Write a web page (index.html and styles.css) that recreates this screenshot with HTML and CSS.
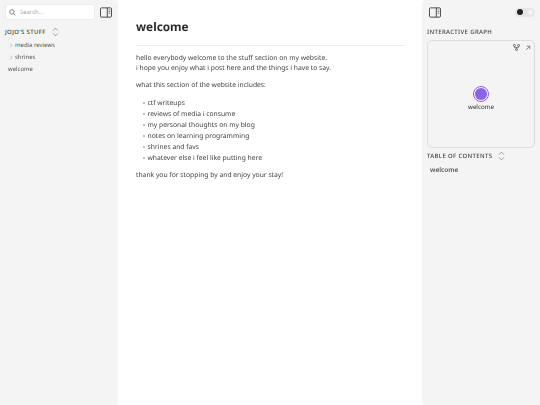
FILE: index.html
```html
<!DOCTYPE html>
<html lang="en">
<head>
<meta charset="utf-8">
<title>welcome</title>
<link rel="stylesheet" href="styles.css">
</head>
<body>
<div class="page">
  <aside class="side left">
    <div class="top-row">
      <div class="search">
        <svg class="search-icon" viewBox="0 0 12 12"><circle cx="5" cy="5" r="3.8"/><path d="M7.8 7.8 11 11"/></svg>
        <span>Search...</span>
      </div>
      <svg class="panel-icon" viewBox="0 0 14 12"><rect x="0.6" y="0.6" width="12.8" height="10.8" rx="1.2"/><path d="M8.5 0.6V11.4"/><path class="thin" d="M10 3h2M10 5h2M10 7h2"/></svg>
    </div>
    <div class="explorer-head">
      <span class="caps">JOJO'S STUFF</span>
      <svg class="updown" viewBox="0 0 10 14"><path d="M1.5 5 5 1.5 8.5 5M1.5 9 5 12.5 8.5 9"/></svg>
    </div>
    <ul class="tree">
      <li class="folder"><svg class="chev" viewBox="0 0 6 8"><path d="M1.5 1 4.5 4 1.5 7"/></svg>media reviews</li>
      <li class="folder"><svg class="chev" viewBox="0 0 6 8"><path d="M1.5 1 4.5 4 1.5 7"/></svg>shrines</li>
      <li class="file">welcome</li>
    </ul>
  </aside>
  <main class="content">
    <h1>welcome</h1>
    <hr>
    <p>hello everybody welcome to the stuff section on my website.<br>i hope you enjoy what i post here and the things i have to say.</p>
    <p>what this section of the website includes:</p>
    <ul class="list">
      <li>ctf writeups</li>
      <li>reviews of media i consume</li>
      <li>my personal thoughts on my blog</li>
      <li>notes on learning programming</li>
      <li>shrines and favs</li>
      <li>whatever else i feel like putting here</li>
    </ul>
    <p>thank you for stopping by and enjoy your stay!</p>
  </main>
  <aside class="side right">
    <div class="right-top">
      <svg class="panel-icon" viewBox="0 0 14 12"><rect x="0.6" y="0.6" width="12.8" height="10.8" rx="1.2"/><path d="M8.5 0.6V11.4"/><path class="thin" d="M10 3h2M10 5h2M10 7h2"/></svg>
      <div class="toggle"><span class="knob"></span><span class="sun"></span></div>
    </div>
    <div class="caps graph-title">INTERACTIVE GRAPH</div>
    <div class="graph">
      <div class="graph-tools">
        <svg class="tool" viewBox="0 0 10 10"><circle cx="2" cy="2" r="1.4"/><circle cx="8" cy="2" r="1.4"/><circle cx="5" cy="8" r="1.4"/><path d="M2 3.4V4.500Q2 5.200 3 5.200H7Q8 5.200 8 4.500V3.400M5 5.200V6.600"/></svg>
        <svg class="tool arrow" viewBox="0 0 10 10"><path d="M2 8 8 2M3 2H8V7"/></svg>
      </div>
      <div class="node"><span class="dot"></span><span class="node-label">welcome</span></div>
    </div>
    <div class="toc-head">
      <span class="caps">TABLE OF CONTENTS</span>
      <svg class="updown" viewBox="0 0 10 14"><path d="M1.5 5 5 1.5 8.5 5M1.5 9 5 12.5 8.5 9"/></svg>
    </div>
    <div class="toc-item">welcome</div>
  </aside>
</div>
</body>
</html>
```
FILE: styles.css
```css
* { box-sizing: border-box; }
html, body { margin: 0; height: 100%; }
body { font-family: "Noto Sans", sans-serif; color: #3f3f3f; background: #fff; overflow: hidden; text-rendering: geometricPrecision; filter: blur(0.28px); }
.page { display: flex; width: 540px; height: 405px; }
.side { width: 118px; flex: none; background: #f4f4f4; }
.left { padding: 4px 6px 0 5px; border-radius: 0 4px 4px 0; }
.right { padding: 6px 5px 0; border-radius: 4px 0 0 4px; }
.content { flex: 1; padding: 0 17px 0 18px; font-size: 6.75px; line-height: 10px; }

.top-row { display: flex; align-items: center; justify-content: space-between; height: 16px; }
.search { display: flex; align-items: center; gap: 4px; width: 90px; height: 16px; padding-left: 3px; background: #fff; border: 1px solid #ececec; border-radius: 4px; font-size: 5.9px; color: #a8a8a8; }
.search-icon { width: 7px; height: 7px; fill: none; stroke: #555; stroke-width: 1.2; }
.panel-icon { width: 12px; height: 11px; fill: none; stroke: #333; stroke-width: 1; flex: none; }
.panel-icon .thin { stroke-width: 0.7; }

.caps { font-size: 6px; font-weight: 500; letter-spacing: 0.35px; color: #3f3f3f; }
.explorer-head { display: flex; align-items: center; gap: 6px; margin-top: 5px; height: 14px; }
.updown { width: 7px; height: 10px; fill: none; stroke: #777; stroke-width: 1; }
.tree { list-style: none; margin: 0; padding: 0; font-size: 5.95px; color: #555; }
.tree li { height: 12px; line-height: 12px; white-space: nowrap; }
.folder { display: flex; align-items: center; gap: 2px; padding-left: 4px; }
.file { padding-left: 3px; }
.chev { width: 4px; height: 5px; fill: none; stroke: #999; stroke-width: 1; }

h1 { margin: 0; padding-top: 19px; font-size: 11.8px; line-height: 16px; font-weight: 700; color: #2b2b2b; }
hr { border: 0; border-top: 1px solid #ececec; margin: 10px 0 7px; }
p { margin: 0 0 7px; }
.list { margin: 0 0 7px; padding: 0 0 0 11.5px; list-style: none; font-size: 6.75px; line-height: 11px; }
.list li { position: relative; height: 11px; }
.list li::before { content: ""; position: absolute; left: -5px; top: 4.5px; width: 2px; height: 2px; border-radius: 50%; background: #aaa; }

.right-top { display: flex; align-items: center; justify-content: space-between; height: 12px; padding-left: 2px; }
.toggle { position: relative; width: 20px; height: 9px; border-radius: 5px; background: #e6e6e6; }
.knob { position: absolute; left: 1.500px; top: 1.250px; width: 6.500px; height: 6.500px; border-radius: 50%; background: #222; }
.sun { position: absolute; right: 2px; top: 2px; width: 5px; height: 5px; border-radius: 50%; background: #f2f2f2; }
.graph-title { margin-top: 9px; line-height: 10px; }
.graph { position: relative; display: flex; align-items: center; justify-content: center; height: 108px; margin-top: 3px; border: 1px solid #dcdcdc; border-radius: 5px; }
.graph-tools { position: absolute; top: 3px; right: 3px; display: flex; align-items: center; gap: 5px; }
.tool { width: 7px; height: 7px; fill: none; stroke: #444; stroke-width: 1; }
.arrow { width: 6px; height: 6px; }
.node { display: flex; flex-direction: column; align-items: center; gap: 2px; margin-top: 10px; }
.dot { width: 12px; height: 12px; border-radius: 50%; background: #8a63e8; outline: 1px solid #8a63e8; outline-offset: 1px; }
.node-label { font-size: 6.2px; line-height: 9px; color: #2b2b2b; font-weight: 400; }
.toc-head { display: flex; align-items: center; gap: 6px; height: 14px; margin-top: 1px; }
.toc-item { margin-top: 2px; padding-left: 3px; font-size: 6.5px; line-height: 10px; font-weight: 600; color: #555; }
```
